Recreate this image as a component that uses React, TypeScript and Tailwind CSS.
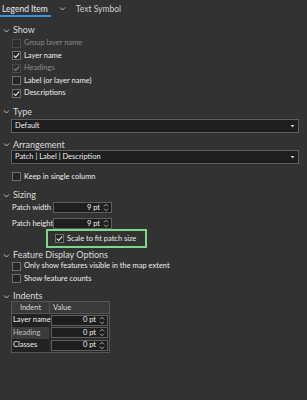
import React from "react";

const Chevron = () => (
  <svg width="7" height="7" viewBox="0 0 7 7" className="shrink-0">
    <path d="M1 2.5 L3.5 5 L6 2.5" stroke="#bdbdbd" strokeWidth="1" fill="none" />
  </svg>
);

const Check = ({ checked, disabled }: { checked?: boolean; disabled?: boolean }) => (
  <div
    className={`w-[9px] h-[9px] border flex items-center justify-center shrink-0 ${
      disabled ? "border-[#4a4a4a] bg-[#2e2e2e]" : "border-[#6e6e6e] bg-[#262626]"
    }`}
  >
    {checked && (
      <svg width="7" height="7" viewBox="0 0 7 7">
        <path
          d="M0.8 3.6 L2.7 5.5 L6.2 1.3"
          stroke={disabled ? "#8a8a8a" : "#f0f0f0"}
          strokeWidth="1.1"
          fill="none"
        />
      </svg>
    )}
  </div>
);

const CheckRow = ({
  label,
  checked,
  disabled,
}: {
  label: string;
  checked?: boolean;
  disabled?: boolean;
}) => (
  <div className="flex items-center h-[12.5px] pl-3 gap-[3px]">
    <Check checked={checked} disabled={disabled} />
    <span className={disabled ? "text-[#8a8a8a]" : "text-[#ececec]"}>{label}</span>
  </div>
);

const Header = ({ title }: { title: string }) => (
  <div className="flex items-center h-[10px] gap-[3px] pl-[3px] text-[9px] text-[#dcdcdc]">
    <Chevron />
    <span>{title}</span>
  </div>
);

const Dropdown = ({ value }: { value: string }) => (
  <div className="ml-[11px] w-[288px] h-[14px] bg-[#1e1e1e] border border-[#5e5e5e] flex items-center justify-between px-[3px]">
    <span className="text-[#ececec]">{value}</span>
    <svg width="5" height="4" viewBox="0 0 5 4">
      <path d="M0.5 1 L4.5 1 L2.5 3.5 Z" fill="#cfcfcf" />
    </svg>
  </div>
);

const Spinner = () => (
  <svg width="6" height="9" viewBox="0 0 6 9" className="shrink-0">
    <path d="M1 3.3 L3 1.3 L5 3.3" stroke="#bdbdbd" strokeWidth="0.9" fill="none" />
    <path d="M1 5.7 L3 7.7 L5 5.7" stroke="#bdbdbd" strokeWidth="0.9" fill="none" />
  </svg>
);

const NumInput = ({ value, w }: { value: string; w: string }) => (
  <div
    className={`${w} h-[11px] bg-[#1e1e1e] border border-[#5e5e5e] flex items-center justify-end gap-[3px] pr-[2px]`}
  >
    <span className="text-[#ececec]">{value}</span>
    <Spinner />
  </div>
);

export default function App() {
  return (
    <div
      className="w-[307px] h-[400px] bg-[#323232] text-[7.5px] leading-[10px] whitespace-nowrap overflow-hidden"
      style={{ fontFamily: '"Lato", "Noto Sans", sans-serif' }}
    >
      <div className="flex items-center h-[17px] gap-[10px]">
        <div className="relative pl-[2px] pr-[1px] text-[8.5px] text-[#ececec]">
          Legend Item
          <div className="absolute left-[0px] right-[-2px] -bottom-[3px] h-[2px] bg-[#3b8fe0]" />
        </div>
        <Chevron />
        <div className="text-[8.5px] text-[#cfcfcf]">Text Symbol</div>
      </div>

      <div className="mt-[8px]">
        <Header title="Show" />
      </div>
      <div className="mt-[2px]">
        <CheckRow label="Group layer name" disabled />
        <CheckRow label="Layer name" checked />
        <CheckRow label="Headings" checked disabled />
        <CheckRow label="Label (or layer name)" />
        <CheckRow label="Descriptions" checked />
      </div>

      <div className="mt-[7px]">
        <Header title="Type" />
      </div>
      <div className="mt-[2px]">
        <Dropdown value="Default" />
      </div>

      <div className="mt-[7px]">
        <Header title="Arrangement" />
      </div>
      <div className="mt-[0px]">
        <Dropdown value="Patch | Label | Description" />
      </div>
      <div className="mt-[7px]">
        <CheckRow label="Keep in single column" />
      </div>

      <div className="mt-[7px]">
        <Header title="Sizing" />
      </div>
      <div className="mt-[2px] flex flex-col gap-[5px] pl-3">
        <div className="flex items-center">
          <span className="w-[41px] text-[#ececec]">Patch width</span>
          <NumInput value="9 pt" w="w-[59px]" />
        </div>
        <div className="flex items-center">
          <span className="w-[41px] text-[#ececec]">Patch height</span>
          <NumInput value="9 pt" w="w-[59px]" />
        </div>
      </div>
      <div className="ml-[46px] w-[101px] h-[19px] border-2 border-[#79d98a] flex items-center pl-[7px] gap-[3px]">
        <Check checked />
        <span className="text-[#ececec]">Scale to fit patch size</span>
      </div>

      <div className="mt-[2px]">
        <Header title="Feature Display Options" />
      </div>
      <div>
        <CheckRow label="Only show features visible in the map extent" />
        <CheckRow label="Show feature counts" />
      </div>

      <div className="mt-[6px]">
        <Header title="Indents" />
      </div>
      <div className="ml-[11px] w-[99px] border border-[#555555] bg-[#2a2a2a]">
        <div className="flex h-[12px] bg-[#3a3a3a] border-b border-[#555555]">
          <div className="w-[38px] border-r border-[#555555] flex items-center justify-center text-[#d8d8d8]">
            Indent
          </div>
          <div className="flex-1 flex items-center pl-[3px] text-[#d8d8d8]">Value</div>
        </div>
        {[
          { name: "Layer name", bg: "bg-[#222222] text-[#ececec]" },
          { name: "Heading", bg: "bg-[#3c3c3c] text-[#bdbdbd]" },
          { name: "Classes", bg: "bg-[#222222] text-[#ececec]" },
        ].map((r) => (
          <div key={r.name} className="flex h-[12.5px] items-center">
            <div className={`w-[37px] h-full flex items-center pl-[1px] ${r.bg}`}>{r.name}</div>
            <div className="flex-1 pl-[2px] pr-[1px]">
              <NumInput value="0 pt" w="w-[57px]" />
            </div>
          </div>
        ))}
      </div>
    </div>
  );
}
